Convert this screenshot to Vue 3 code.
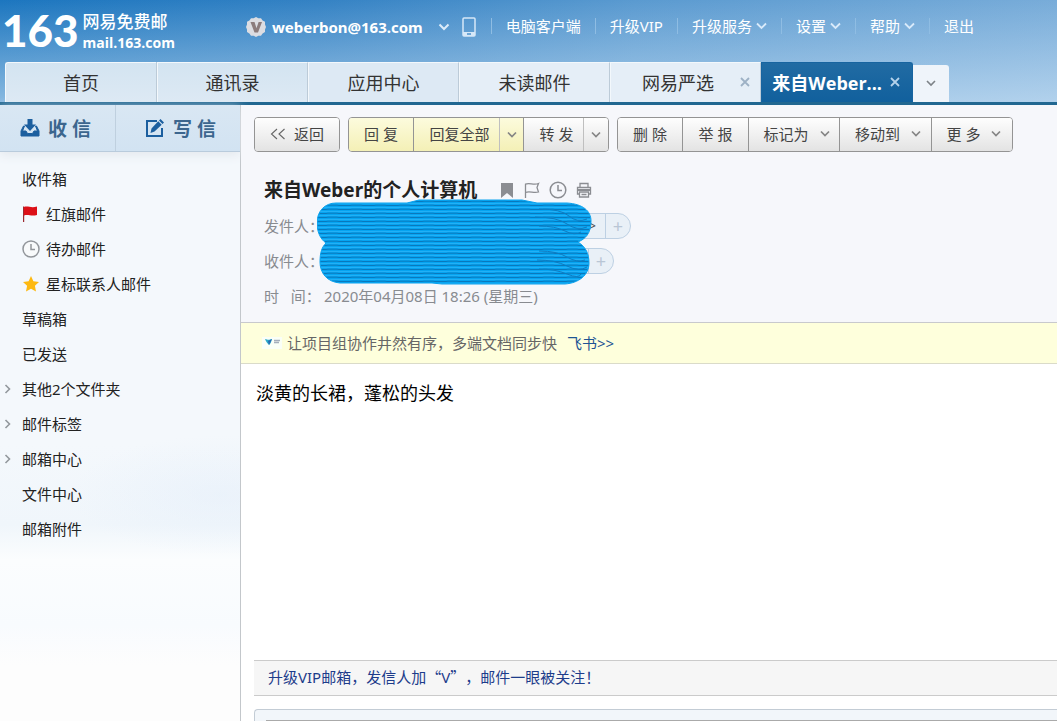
<script setup>
const nav = [
  { text: '电脑客户端' },
  { text: '升级VIP' },
  { text: '升级服务', menu: true },
  { text: '设置', menu: true },
  { text: '帮助', menu: true },
  { text: '退出' },
]
const tabs = [
  { text: '首页' },
  { text: '通讯录' },
  { text: '应用中心' },
  { text: '未读邮件' },
  { text: '网易严选', close: true },
  { text: '来自Weber...', close: true, active: true },
]
const folders = [
  { text: '收件箱' },
  { text: '红旗邮件', icon: 'flag' },
  { text: '待办邮件', icon: 'clock' },
  { text: '星标联系人邮件', icon: 'star' },
  { text: '草稿箱' },
  { text: '已发送' },
  { text: '其他2个文件夹', expand: true },
  { text: '邮件标签', expand: true },
  { text: '邮箱中心', expand: true },
  { text: '文件中心' },
  { text: '邮箱附件' },
]
const groups = [
  [{ text: '返回', kind: 'back' }],
  [
    { text: '回 复', kind: 'short yellow' },
    { text: '回复全部', kind: 'all yellow' },
    { kind: 'arrow yellow soft', label: '回复全部选项', menu: true },
    { text: '转 发', kind: 'forward' },
    { kind: 'arrow soft', label: '转发选项', menu: true },
  ],
  [
    { text: '删 除', kind: 'short' },
    { text: '举 报', kind: 'short' },
    { text: '标记为', kind: 'drop', menu: true },
    { text: '移动到', kind: 'drop', menu: true },
    { text: '更 多', kind: 'more', menu: true },
  ],
]
</script>

<template>
  <div class="page">
    <header class="header">
      <div class="top">
        <a class="logo" href="#">
          <span class="num">163</span>
          <span class="brand"><b>网易免费邮</b><span>mail.163.com</span></span>
        </a>
        <div class="account">
          <svg width="20" height="20" viewBox="0 0 20 20">
            <path d="M10 0 12.4 1.2 15 1.2 16.6 3.4 19 4.8 19 7.5 20 10 19 12.5 19 15 16.6 16.6 15 18.8 12.4 18.8 10 20 7.6 18.8 5 18.8 3.4 16.6 1 15 1 12.5 0 10 1 7.5 1 4.8 3.4 3.4 5 1.2 7.6 1.2Z" fill="#dcdde2" />
            <path d="M4.5 5h4l2 6.2L12.600 5H16l-4 10.500H8.500Z" fill="#8c7c7c" />
          </svg>
          <button class="email" type="button">weberbon@163.com
            <svg width="12" height="8" viewBox="0 0 12 8"><path d="M1.500 1.500 6 6 10.500 1.500" fill="none" stroke="#dcecfa" stroke-width="2" /></svg>
          </button>
          <svg width="14" height="20" viewBox="0 0 14 20">
            <rect x="1" y="1" width="12" height="18" rx="1" fill="none" stroke="#d6e8f8" stroke-width="1.500" />
            <path d="M1 15h12v4H1Z" fill="#d6e8f8" /><path d="M5 17h4" stroke="#4a90cc" stroke-width="1.500" />
          </svg>
        </div>
        <nav class="nav">
          <a v-for="n in nav" :key="n.text" href="#">{{ n.text }}<svg v-if="n.menu" width="11" height="8" viewBox="0 0 11 8"><path d="M1 1.500 5.500 6 10 1.500" fill="none" stroke="#d9eafa" stroke-width="1.800" /></svg></a>
        </nav>
      </div>
      <div class="tabs">
        <button v-for="t in tabs" :key="t.text" type="button" class="tab" :class="{ active: t.active, closable: t.close }">
          <span>{{ t.text }}</span>
          <svg v-if="t.close" width="10" height="10" viewBox="0 0 10 10"><path d="M1 1 9 9M9 1 1 9" stroke="currentColor" stroke-width="1.800" /></svg>
        </button>
        <button type="button" class="more-tabs" aria-label="更多标签">
          <svg width="10" height="7" viewBox="0 0 10 7"><path d="M1 1 5 5 9 1" fill="none" stroke="#7d8287" stroke-width="1.600" /></svg>
        </button>
      </div>
    </header>

    <div class="body">
      <aside class="side">
        <div class="actions">
          <button type="button" class="receive">
            <svg width="20" height="20" viewBox="0 0 20 20">
              <path d="M7.500 1h5v5.500H16L10 13 4 6.500h3.500Z" fill="#1c5f9f" />
              <path d="M3.500 8 1 13v5h18v-5l-2.500-5h-1l2 5H14l-1.500 2.500h-5L6 13H2.500l2-5Z" fill="#1c5f9f" stroke="#1c5f9f" stroke-linejoin="round" />
            </svg>收 信
          </button>
          <button type="button" class="write">
            <svg width="20" height="20" viewBox="0 0 20 20">
              <path d="M12 3H2v15h15V10" fill="none" stroke="#1c5f9f" stroke-width="2" />
              <path d="M15.500 1 19 4.500 17.500 6 14 2.500ZM13.200 3.300 16.700 6.800 9.500 13.500 5.500 15 6.500 10.500Z" fill="#1c5f9f" />
            </svg>写 信
          </button>
        </div>
        <ul class="folders">
          <li v-for="f in folders" :key="f.text">
            <a href="#">
              <span class="caret"><svg v-if="f.expand" width="8" height="10" viewBox="0 0 8 10"><path d="M1.500 1 5.500 5 1.500 9" fill="none" stroke="#93989d" stroke-width="1.600" /></svg></span>
              <svg v-if="f.icon === 'flag'" width="18" height="18" viewBox="0 0 18 18"><path d="M1 1.500h1.200V17H1Z" fill="#9c2a30" /><path d="M2 2c4-1.500 7 1.500 13-.5V10c-6 1.500-9-1-13 .5Z" fill="#dc1018" /></svg>
              <svg v-if="f.icon === 'clock'" width="18" height="18" viewBox="0 0 18 18"><circle cx="9" cy="9" r="8" fill="#f8fafb" stroke="#92969b" stroke-width="1.500" /><path d="M9 4v5.500h4" fill="none" stroke="#92969b" stroke-width="1.500" /></svg>
              <svg v-if="f.icon === 'star'" width="18" height="18" viewBox="0 0 18 18"><path d="m9 1 2.400 5.200 5.600.7-4.100 3.900 1.100 5.700-5-2.800-5 2.800 1.100-5.700L1 6.900l5.600-.7Z" fill="#fdb912" /></svg>
              <span>{{ f.text }}</span>
            </a>
          </li>
        </ul>
      </aside>

      <main class="main">
        <section class="head">
          <div class="toolbar">
            <div v-for="(g, i) in groups" :key="i" class="group">
              <button v-for="(b, j) in g" :key="j" type="button" :class="b.kind" :aria-label="b.label">
                <svg v-if="b.kind === 'back'" width="16" height="12" viewBox="0 0 16 12"><path d="M7 1 1.500 6 7 11M14.500 1 9 6l5.500 5" fill="none" stroke="#666" stroke-width="1.100" /></svg>
                <span v-if="b.text">{{ b.text }}</span>
                <svg v-if="b.menu" width="10" height="8" viewBox="0 0 10 8"><path d="M1 1.500 5 5.500 9 1.500" fill="none" stroke="#858585" stroke-width="1.700" /></svg>
              </button>
            </div>
          </div>

          <div class="subject">
            <h1>来自Weber的个人计算机</h1>
            <svg width="16" height="18" viewBox="0 0 16 18"><path d="M2 2h12v15l-6-5-6 5Z" fill="#8b8d92" /></svg>
            <svg width="16" height="18" viewBox="0 0 16 18"><path d="M1.500 17V3.200c4-2 8 1.500 13-.7l-1.500 4 1.500 4.500c-5 1.500-9-1.500-13 .5" fill="none" stroke="#8b8d92" stroke-width="1.300" /></svg>
            <svg width="18" height="18" viewBox="0 0 18 18"><circle cx="9" cy="9" r="7.800" fill="none" stroke="#8b8d92" stroke-width="1.500" /><path d="M9 4v5.500h4" fill="none" stroke="#8b8d92" stroke-width="1.500" /></svg>
            <svg width="16" height="18" viewBox="0 0 16 18" fill="none" stroke="#8b8d92" stroke-width="1.300"><path d="M4 6V2.500h8V6M3.500 13H1.500V6.500h13V13h-2" /><path d="M2 9h12" stroke-width="2" /><path d="M3.500 11h9v5h-9ZM5.500 13.500h5" /></svg>
          </div>

          <div class="people">
            <div class="row"><span class="label">发件人：</span><span class="chip wide"><span>&gt;</span><button type="button" aria-label="添加发件人">+</button></span></div>
            <div class="row"><span class="label">收件人：</span><span class="chip"><span></span><button type="button" aria-label="添加收件人">+</button></span></div>
            <svg class="scribble" width="276" height="86" viewBox="0 0 276 86">
              <defs>
                <pattern id="ink" width="24" height="4" patternUnits="userSpaceOnUse">
                  <rect width="24" height="4" fill="#06a4f1" />
                  <path d="M0 2.500H9L11 2.200H20L22 2.500H24" fill="none" stroke="#0a78bc" stroke-width="1" />
                  <path d="M0 .5H24" stroke="#22b0f6" stroke-width="1" />
                </pattern>
              </defs>
              <path d="M19 4H90L102 1H205L220 4H250C266 5 274 12 274 22 274 35 268 40 261 43 269 48 272 55 272 64 272 76 262 84 248 85H125L115 84H23C10 83 3 74 3 63 3 53 5 48 9 44 3 40 0 32 0 24 0 12 8 4 19 4Z" fill="url(#ink)" stroke="#0aa2ee" stroke-width="1" />
              <path d="M222 10q22 0 30 7t18 3M218 18q22 0 32 7t20 3M222 27q16 0 26 5t16 1M222 52q18 0 28 6t18 3M220 61q18 0 30 6t20 1M222 70q16 0 28 5t14 0" fill="none" stroke="#0d7cc2" stroke-width="1" />
            </svg>
          </div>
          <div class="row date"><span class="label">时&nbsp;&nbsp;&nbsp;间：</span><span>2020年04月08日 18:26 (星期三)</span></div>
        </section>

        <section class="notice">
          <svg width="20" height="12" viewBox="0 0 20 12"><rect width="20" height="12" fill="#fafff7" /><path d="M3 2c3 1 4 1 7 0-1 4-2 5-3 6C6 7 4 5 3 2Z" fill="#2ba9ca" /><path d="m6 4 4-2-3 6Z" fill="#2769b1" /><path d="M12 3.500h6M12 5.500h5" stroke="#a4aebb" stroke-width="1.500" /></svg>
          <span>让项目组协作井然有序，多端文档同步快</span>
          <a href="#">飞书&gt;&gt;</a>
        </section>

        <article class="letter">淡黄的长裙，蓬松的头发</article>

        <div class="tip"><a href="#">升级VIP邮箱，发信人加<span class="quote">“</span>V<span class="quote">”</span>，邮件一眼被关注！</a></div>
        <form class="quick"><textarea aria-label="快捷回复"></textarea></form>
      </main>
    </div>
  </div>
</template>

<style>
html, body { background: #fff; }
</style>

<style scoped>
* { box-sizing: border-box; }
.page {
  height: 100vh;
  display: flex;
  flex-direction: column;
  overflow: hidden;
  font-family: "Noto Sans", "Noto Sans CJK SC", sans-serif;
  font-size: 15px;
  color: #333;
}
button { font: inherit; color: inherit; margin: 0; padding: 0; border: 0; background: none; cursor: pointer; }
a { color: inherit; text-decoration: none; }
svg { display: block; flex: none; }
.header {
  flex: none;
  border-bottom: 3px solid #216791;
  background:
    linear-gradient(180deg, rgba(255, 255, 255, 0) 0%, rgba(225, 240, 252, 0.55) 100%),
    linear-gradient(90deg, #1c76bf 0%, #3482c4 30%, #5a9ad0 60%, #78acd9 100%);
}
.top { height: 62px; display: flex; align-items: flex-start; white-space: nowrap; }
.logo { width: 246px; height: 62px; padding-left: 2px; display: flex; align-items: center; gap: 4px; color: #fff; flex: none; }
.num { font: 900 44px/60px Lato, sans-serif; padding-bottom: 2px; }
.brand { display: flex; flex-direction: column; font: 700 14px/19px "Open Sans", "Noto Sans CJK SC", sans-serif; }
.brand b { font-size: 17px; line-height: 22px; font-weight: 500; }
.account { height: 54px; display: flex; align-items: center; gap: 6px; color: #fff; flex: none; }
.email { display: flex; align-items: center; gap: 15px; font-weight: 700; margin-right: 6px; }
.nav { height: 52px; display: flex; align-items: center; margin-left: 15px; color: #fff; }
.nav a { display: flex; align-items: center; gap: 4px; padding: 0 14px; line-height: 16px; border-left: 1px solid #8fbde3; }
.tabs { display: flex; align-items: flex-end; padding-left: 5px; }
.tab {
  flex: 0 1 151px;
  height: 40px;
  display: flex;
  align-items: center;
  justify-content: center;
  padding-bottom: 2px;
  font-size: 18px;
  white-space: nowrap;
  background: linear-gradient(#d3e4f1, #dde9f4);
  border-top: 1px solid #f3f8fc;
  border-right: 1px solid #bccbd8;
  border-left: 1px solid #f3f8fc;
}
.tab:first-child { flex-basis: 152px; border-top-left-radius: 3px; }
.tab:nth-child(n + 3) { background: #dde9f4; }
.tab:nth-child(n + 4) { background: #e5eef7; }
.closable { justify-content: flex-end; gap: 26px; padding-right: 10px; color: #333; }
.closable svg { color: #9db1c5; }
.tab.active { flex-basis: 152px; gap: 8px; padding-right: 12px; color: #fff; font-family: "Open Sans", "Noto Sans CJK SC", sans-serif; font-weight: 700; background: linear-gradient(#216ba3, #11609d); border-color: #1764a0; border-top-right-radius: 3px; }
.active svg { color: #b4d2eb; }
.more-tabs { width: 36px; height: 37px; display: flex; align-items: center; justify-content: center; background: #eff4fa; border-top-right-radius: 3px; }
.body { flex: 1; min-height: 0; display: flex; }
.side {
  width: 241px;
  flex: none;
  border-right: 1px solid #c3c7cb;
  background:
    radial-gradient(ellipse 150px 60px at 220px 390px, rgba(228, 238, 250, 0.5), rgba(228, 238, 250, 0)),
    linear-gradient(#f4f8fc 0, #f4f8fc 340px, #f0f6fb 420px, #fbfdfe 455px, #f8fbfe 520px, #fdfdfd 560px);
}
.actions { height: 47px; display: grid; grid-template-columns: 116px 1fr; border-bottom: 1px solid #b9cbdc; background: linear-gradient(#d9e7f3, #d2e3f2); box-shadow: 0 3px 10px #e3e8ed; }
.actions button { display: flex; align-items: center; gap: 8px; padding-left: 20px; font-size: 19px; font-weight: 700; color: #3c668e; white-space: nowrap; }
.actions .receive { border-right: 1px solid #bfd0df; }
.actions .write { padding-left: 29px; }
.folders { list-style: none; margin: 0; padding: 9px 0 0; }
.folders a { height: 35px; display: flex; align-items: center; padding-left: 4px; color: #222; }
.folders a > svg { margin-right: 6px; }
.caret { width: 18px; }
.main { flex: 1; min-width: 0; display: flex; flex-direction: column; background: #fff; }
.head { flex: none; background: #f6f7fb; border-bottom: 1px solid #c8c9cd; padding: 12px 0 9px 13px; }
.toolbar { display: flex; gap: 8px; white-space: nowrap; color: #444; }
.group { display: flex; height: 35px; border: 1px solid #949494; border-radius: 4px; overflow: hidden; }
.group button { display: flex; align-items: center; justify-content: center; padding-bottom: 2px; background: linear-gradient(#fefefe, #e3e3e3); border-left: 1px solid #949494; }
.group button:first-child { border-left: 0; }
.group .back { width: 84px; gap: 8px; }
.group .short { width: 64px; }
.group .short + .short { width: 66px; }
.group .all { width: 86px; padding-left: 6px; }
.group .forward { width: 60px; padding-left: 6px; }
.group .arrow { width: 25px; padding-bottom: 0; }
.group .all + .arrow { width: 24px; }
.group .drop { width: 92px; gap: 11px; padding-left: 5px; }
.group .short + .drop { width: 91px; }
.group .more { width: 81px; gap: 11px; padding-left: 4px; }
.group .yellow { background: linear-gradient(#fcfbdd, #f4f0b6); }
.group .soft { border-left-color: #bfbfbf; }
.subject { display: flex; align-items: center; gap: 9px; margin-top: 21px; padding-left: 10px; height: 34px; }
h1 { margin: 0 13px 0 0; font-size: 19px; line-height: 34px; font-weight: 700; color: #222; white-space: nowrap; }
.people { position: relative; margin-top: 1px; }
.row { height: 35px; display: flex; align-items: center; padding-left: 10px; color: #888b90; white-space: nowrap; }
.label { width: 60px; }
.chip { display: flex; width: 290px; height: 26px; border: 1px solid #bdd0e3; border-radius: 13px; background: #e9f0f7; color: #555; }
.chip > span { flex: 1; text-align: right; padding-right: 9px; line-height: 24px; font-size: 14px; }
.chip button { width: 25px; border-left: 1px solid #bdd0e3; color: #b9c6d5; font-size: 18px; line-height: 22px; }
.chip.wide { width: 307px; }
.scribble { position: absolute; left: 63px; top: -9px; }
.notice { flex: none; height: 41px; display: flex; align-items: center; gap: 5px; padding: 0 0 1px 21px; background: #feffdc; border-bottom: 1px solid #dadbc9; color: #666; white-space: nowrap; }
.notice a { margin-left: 5px; color: #1e5494; }
.letter { flex: 1; padding: 15px; font-size: 18px; line-height: 28px; color: #000; }
.tip { flex: none; height: 36px; margin-left: 13px; padding: 0 0 3px 14px; display: flex; align-items: center; border-top: 1px solid #cbcbcb; border-bottom: 1px solid #cbcbcb; background: #f6f6f6; color: #1d3c8b; white-space: nowrap; text-spacing-trim: space-all; }
.quote { font-family: "Noto Sans CJK SC", sans-serif; }
.quick { flex: none; height: 12px; margin: 13px 0 0 13px; padding: 10px 0 0 11px; overflow: hidden; border: 1px solid #c3ccd5; border-width: 1px 0 0 1px; border-top-left-radius: 4px; background: #f2f6fa; }
.quick textarea { display: block; width: 100%; height: 60px; border: 1px solid #aaa; resize: none; }
</style>
